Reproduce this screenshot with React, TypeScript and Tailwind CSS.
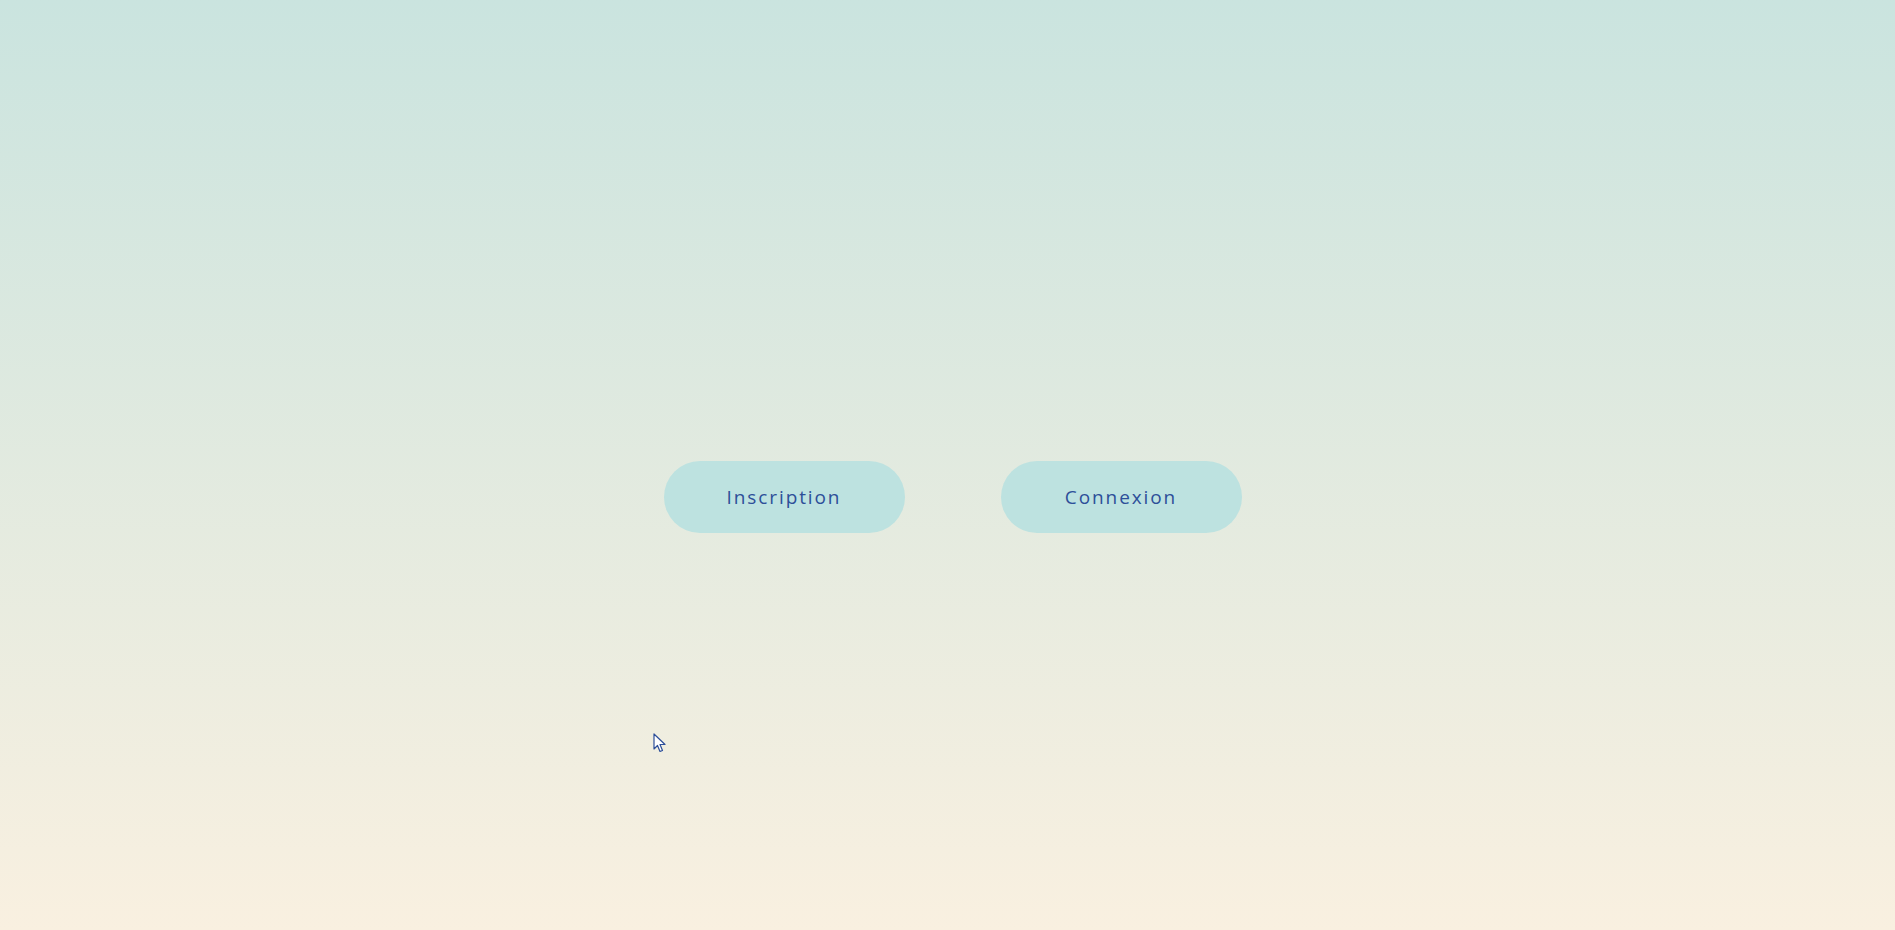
export default function App() {
  return (
    <div
      className="relative min-h-screen h-[930px] w-full bg-gradient-to-b from-[#cae4df] to-[#f9f0e0] flex items-center justify-center"
      style={{ fontFamily: '"Open Sans", "Noto Sans", sans-serif' }}
    >
      <div className="flex items-center gap-[96px] pt-[64px] pl-[10px]">
        <button className="w-[241px] h-[72px] rounded-full bg-[#bde2e0] text-[#2d4f99] text-[19px] tracking-[0.1em]">
          Inscription
        </button>
        <button className="w-[241px] h-[72px] rounded-full bg-[#bde2e0] text-[#2d4f99] text-[19px] tracking-[0.1em]">
          Connexion
        </button>
      </div>

      {/* cursor */}
      <svg
        className="absolute left-[653px] top-[733px]"
        width="14"
        height="21"
        viewBox="0 0 14 21"
      >
        <path
          d="M1 1 L1 16 L4.5 12.5 L7 18.5 L9.5 17.5 L7 11.5 L12 11.5 Z"
          fill="#ffffff"
          stroke="#2d4f99"
          strokeWidth="1.2"
          strokeLinejoin="round"
        />
      </svg>
    </div>
  )
}
